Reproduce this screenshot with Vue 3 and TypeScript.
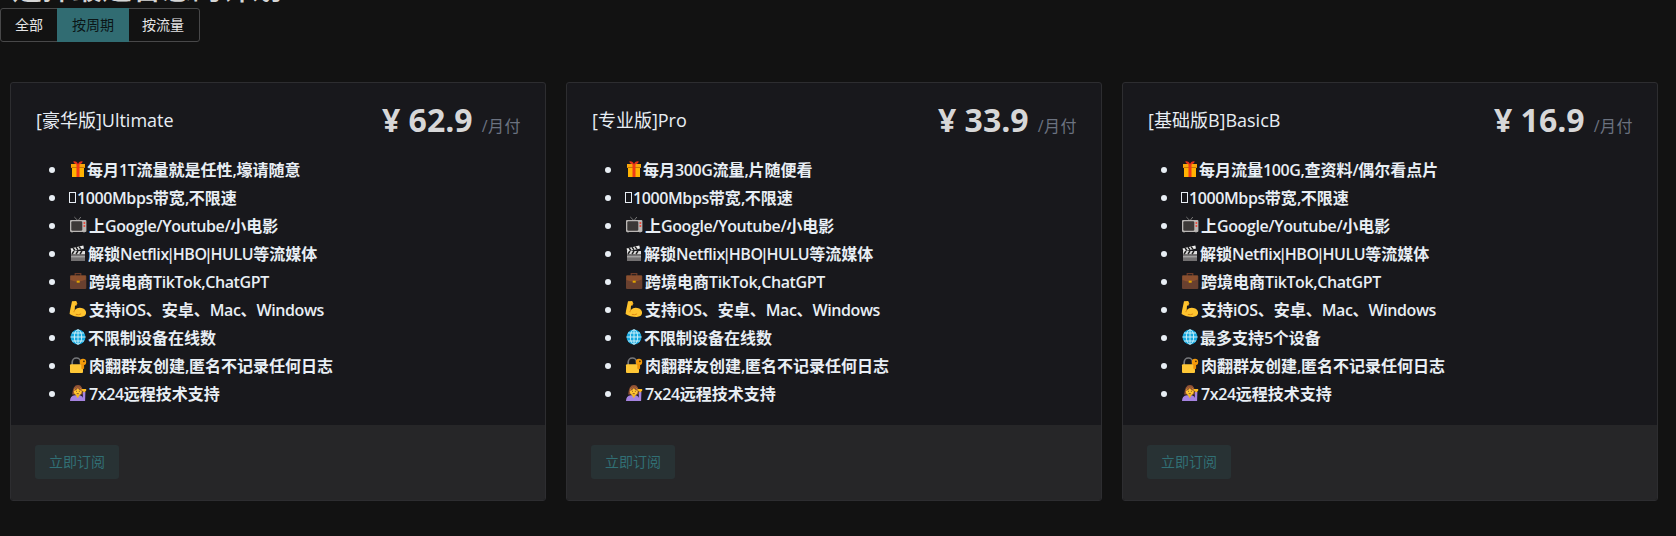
<script setup lang="ts">
import { ref } from 'vue'

type Icon = 'gift' | 'box' | 'tv' | 'clapper' | 'case' | 'arm' | 'globe' | 'lock' | 'person'

interface Feature {
  icon: Icon
  text: string
}

interface Plan {
  name: string
  price: string
  features: Feature[]
}

const tabs = ['全部', '按周期', '按流量']
const active = ref(1)

const features = (traffic: string, devices: string): Feature[] => [
  { icon: 'gift', text: traffic },
  { icon: 'box', text: '1000Mbps带宽,不限速' },
  { icon: 'tv', text: '上Google/Youtube/小电影' },
  { icon: 'clapper', text: '解锁Netflix|HBO|HULU等流媒体' },
  { icon: 'case', text: '跨境电商TikTok,ChatGPT' },
  { icon: 'arm', text: '支持iOS、安卓、Mac、Windows' },
  { icon: 'globe', text: devices },
  { icon: 'lock', text: '肉翻群友创建,匿名不记录任何日志' },
  { icon: 'person', text: '7x24远程技术支持' },
]

const plans: Plan[] = [
  { name: '[豪华版]Ultimate', price: '62.9', features: features('每月1T流量就是任性,壕请随意', '不限制设备在线数') },
  { name: '[专业版]Pro', price: '33.9', features: features('每月300G流量,片随便看', '不限制设备在线数') },
  { name: '[基础版B]BasicB', price: '16.9', features: features('每月流量100G,查资料/偶尔看点片', '最多支持5个设备') },
]

// Splits mixed text into Latin runs, bars and CJK runs so each gets its own tracking.
const runs = (text: string): { text: string; kind: string }[] =>
  (text.match(/\||[\x20-\x7b\x7d\x7e]+|[^\x20-\x7e]+/g) ?? []).map((t) => ({
    text: t,
    kind: t === '|' ? 'bar' : t.charCodeAt(0) < 128 ? 'latin' : 'cjk',
  }))
</script>

<template>
  <main class="page">
    <h1 class="heading"><span>选择最适合您的计划</span></h1>
    <div class="tabs">
      <button
        v-for="(tab, i) in tabs"
        :key="tab"
        class="tab"
        :class="{ active: active === i }"
        @click="active = i"
      >{{ tab }}</button>
    </div>
    <section class="plans">
      <article v-for="plan in plans" :key="plan.name" class="card">
        <div class="body">
          <header class="top">
            <span class="name">{{ plan.name }}</span>
            <span class="cost"><b class="price">¥ {{ plan.price }}</b><span class="period">/月付</span></span>
          </header>
          <ul class="list">
            <li v-for="f in plan.features" :key="f.icon" class="item">
              <i class="dot"></i>
              <span v-if="f.icon === 'box'" class="tofu"></span>
              <svg v-else class="icon" :class="f.icon" viewBox="0 0 18 18" width="18" height="18">
                <g v-if="f.icon === 'gift'">
                  <path d="M3 7h12v10H3z" fill="#ffb302" />
                  <path d="M2 4h14v4H2z" fill="#f9a70b" />
                  <path d="M2.5 7.5h13" stroke="#b76a08" stroke-width=".8" />
                  <path d="M7.5 4h3v13h-3z" fill="#f03a17" />
                  <path d="M9 4.3C7 4.3 4.4 3.5 4.4 1.2 6.8.9 8.4 2 9 4.3ZM9 4.3c2 0 4.6-.8 4.6-3.1C11.2.9 9.6 2 9 4.3Z" fill="#e6321b" />
                </g>
                <g v-else-if="f.icon === 'tv'">
                  <path d="M5.3 1 9 4.7 11.8 1" fill="none" stroke="#777" stroke-width="1" />
                  <rect x="1" y="4" width="16.4" height="12" rx="1" fill="#b9b6b4" />
                  <rect x="2.3" y="5.2" width="11" height="9.5" rx="1.2" fill="#3c3938" />
                  <circle cx="15.4" cy="7" r="1" fill="#f04435" />
                  <circle cx="15.4" cy="10" r="1" fill="#f04435" />
                  <path d="M3 16v1M15 16v1" stroke="#555" stroke-width="1.5" />
                </g>
                <g v-else-if="f.icon === 'clapper'">
                  <path d="m1.5 4.5 12.8-3 .7 3-12.5 3z" fill="#eee" />
                  <path d="m4 4 2 2.5m1-3.2 2 2.5m1-3.2 2 2.5" stroke="#222" stroke-width="1.5" />
                  <rect x="2" y="7" width="14" height="10" fill="#737172" />
                  <path d="M2 7h14v3H2z" fill="#ddd" />
                  <path d="m5 7-2 3m6-3-2 3m6-3-2 3" stroke="#222" stroke-width="1.5" />
                  <path d="M2 12.8h14" stroke="#c9c9c9" stroke-width=".8" />
                </g>
                <g v-else-if="f.icon === 'case'">
                  <path d="M6.2 4V1.7h5.6V4" fill="none" stroke="#6e3c29" stroke-width="1.2" />
                  <rect x="1" y="3.5" width="16.3" height="13.5" rx="1" fill="#69402f" />
                  <path d="M1.5 3.5h15.3v4Q9 11.3 1.5 8z" fill="#8b502f" />
                  <rect x="7.7" y="8.7" width="3" height="2" fill="#e2a600" />
                </g>
                <g v-else-if="f.icon === 'arm'">
                  <path d="M3 1.2 7.2 1l1.2 2.7-1.2 2-1.2-.2-.3 4.4q3.7-3.5 8.6-1.3 3.2 1.8 2.7 5-.7 3.3-5.2 3.3-6.9 0-11.2-3L1 10.8z" fill="#ffc42e" />
                  <path d="M5.8 10.1q-1.1 1.1-.8 2.1m2-8.8.7 1.5M6.8 14.4q3 .8 5.3-.5" fill="none" stroke="#df8b12" stroke-width="1" />
                </g>
                <g v-else-if="f.icon === 'globe'">
                  <circle cx="9" cy="9" r="7.5" fill="#16a8df" />
                  <g fill="none" stroke="#d7f4fc" stroke-width=".9">
                    <ellipse cx="9" cy="9" rx="3.7" ry="7.2" />
                    <path d="M9 1.5v15M1.5 9h15M3 5h12M3 13h12" />
                  </g>
                </g>
                <g v-else-if="f.icon === 'lock'">
                  <path d="M3.2 9V6.2a4.2 4.2 0 0 1 8.4 0V9" fill="none" stroke="#77787b" stroke-width="1.7" />
                  <rect x="1" y="8.3" width="13" height="8.7" rx="1" fill="#ffc736" />
                  <circle cx="14" cy="6" r="3.2" fill="#f59b0a" />
                  <path d="M12.3 8h2.8v4.6l-1.5 1-1.3-1.2z" fill="#ec9209" />
                  <circle cx="14.9" cy="5.3" r=".9" fill="#49320e" />
                </g>
                <g v-else>
                  <path d="M3.2 10.5Q3.7 1 9 1t4.8 9.5z" fill="#945335" />
                  <path d="M1 17q0-5 4.8-5.7h5.1q2.1.5 2.7 2.4L14 8h2.4l-.3 9z" fill="#a583e0" />
                  <path d="M6.7 11h4L8.8 14.2z" fill="#f2b41e" />
                  <circle cx="8.8" cy="7.3" r="3.9" fill="#ffc52f" />
                  <path d="M4.8 7q1.2-3.6 4-4.3 2.7.7 4 4.3-2.7-.6-4-2.7Q7.5 6.4 4.8 7z" fill="#945335" />
                  <path d="M12.4 5.1h4.8v1.7l-2 1.7-2-1.7z" fill="#ffbc20" />
                  <path d="M7 7.3h.9m2 0h.9M7.7 9.7h2.1" stroke="#5f3923" stroke-width=".8" />
                </g>
              </svg>
              <span class="text"><span v-for="(r, i) in runs(f.text)" :key="i" :class="r.kind">{{ r.text }}</span></span>
            </li>
          </ul>
        </div>
        <footer class="foot"><button class="buy">立即订阅</button></footer>
      </article>
    </section>
  </main>
</template>

<style>
body {
  background: #121212;
}
</style>

<style scoped>
.page {
  height: 536px;
  overflow: hidden;
  box-sizing: border-box;
  background: #121212;
  color: #e8eef4;
  font-family: 'Open Sans', 'Noto Sans CJK SC', sans-serif;
}
.heading {
  display: flex;
  align-items: flex-end;
  height: 8px;
  margin: 0;
  padding: 0 0 4px 12px;
  box-sizing: border-box;
  overflow: hidden;
  font-size: 30px;
  font-weight: 500;
  line-height: 32px;
  color: #d6d6d6;
}
button {
  font: inherit;
  margin: 0;
  cursor: pointer;
}
.tabs {
  display: flex;
  width: 200px;
  height: 34px;
  box-sizing: border-box;
  border: 1px solid #484849;
  border-radius: 3px;
}
.tab {
  padding: 0 14px;
  border: 0;
  background: transparent;
  color: #e4e4e5;
  font-size: 14px;
  line-height: 32px;
}
.tab.active {
  margin: -1px 0;
  padding: 0 15px;
  background: #316c72;
  color: #0b1516;
}
.tab:last-child {
  padding: 0 13px;
}
.plans {
  display: grid;
  grid-template-columns: repeat(3, 536px);
  gap: 20px;
  padding: 40px 0 0 10px;
}
.card {
  height: 419px;
  box-sizing: border-box;
  display: flex;
  flex-direction: column;
  border: 1px solid #2d2d30;
  border-radius: 3px;
  background: #18181c;
  overflow: hidden;
}
.body {
  flex: 1;
  padding: 18px 24px 0;
}
.top {
  display: flex;
  justify-content: space-between;
  align-items: center;
  height: 38px;
}
.name {
  padding-left: 1px;
  font-size: 18px;
  line-height: 28px;
}
.cost {
  display: flex;
  align-items: baseline;
  gap: 9px;
}
.price {
  font-size: 32px;
  line-height: 38px;
  font-weight: 700;
  color: #d7d7d8;
}
.period {
  font-size: 16px;
  letter-spacing: 0.5px;
  color: #6b7280;
}
.list {
  margin: 16px 0 0;
  padding: 0 0 0 14px;
  list-style: none;
}
.item {
  display: flex;
  align-items: center;
  height: 28px;
  font-size: 16px;
  font-weight: 600;
  white-space: nowrap;
}
.latin {
  letter-spacing: -0.4px;
}
.bar {
  margin: 0 -2.5px;
}
.dot {
  width: 6px;
  height: 6px;
  margin: 1px 14px 0 0;
  border-radius: 50%;
  background: #e8eef4;
}
.icon {
  flex: none;
  margin-right: 2px;
}
.icon.gift {
  margin-right: 0;
}
.icon.clapper,
.icon.globe {
  margin-right: 1px;
}
.tofu {
  width: 7px;
  height: 11px;
  margin-right: 1px;
  box-sizing: border-box;
  border: 1px solid #e8eef4;
}
.foot {
  height: 75px;
  padding: 20px 24px 0;
  box-sizing: border-box;
  background: #262628;
}
.buy {
  width: 84px;
  height: 34px;
  padding: 0;
  border: 0;
  border-radius: 3px;
  background: #283234;
  color: #316f74;
  font-size: 14px;
  line-height: 34px;
  display: block;
}
</style>
